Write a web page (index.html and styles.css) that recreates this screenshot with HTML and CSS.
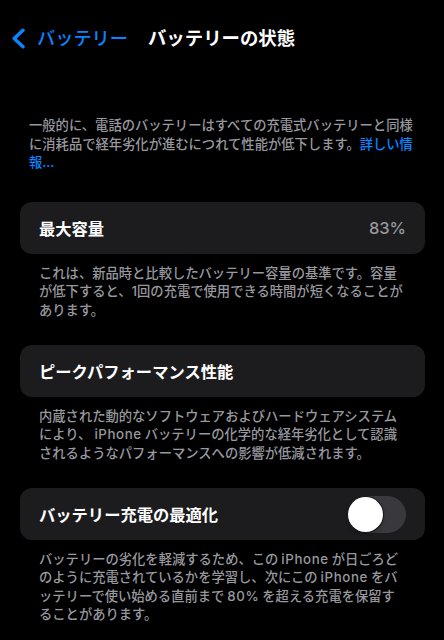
FILE: index.html
```html
<!DOCTYPE html>
<html lang="ja">
<head>
<meta charset="utf-8">
<title>バッテリーの状態</title>
<link rel="stylesheet" href="styles.css">
</head>
<body>
<header class="nav">
  <a class="back" href="#">
    <svg class="chev" width="15" height="21" viewBox="0 0 15 21" aria-hidden="true">
      <path d="M12 2.2 L3.2 10.5 L12 18.8" fill="none" stroke="#0a84ff" stroke-width="3.4" stroke-linecap="round" stroke-linejoin="round"/>
    </svg>
    <span class="back-label">バッテリー</span>
  </a>
  <h1 class="title">バッテリーの状態</h1>
</header>

<p class="intro">一般的に、電話のバッテリーはすべての充電式バッテリーと同様に消耗品で経年劣化が進むにつれて性能が低下します。<a class="link" href="#">詳しい情報...</a></p>

<section class="group">
  <div class="card">
    <span class="label">最大容量</span>
    <span class="value">83%</span>
  </div>
  <p class="note">これは、新品時と比較したバッテリー容量の基準です。容量が低下すると、1回の充電で使用できる時間が短くなることがあります。</p>
</section>

<section class="group">
  <div class="card">
    <span class="label">ピークパフォーマンス性能</span>
  </div>
  <p class="note">内蔵された動的なソフトウェアおよびハードウェアシステムにより、<span class="en">iPhone</span>バッテリーの化学的な経年劣化として認識されるようなパフォーマンスへの影響が低減されます。</p>
</section>

<section class="group">
  <div class="card">
    <span class="label">バッテリー充電の最適化</span>
    <span class="toggle"><span class="knob"></span></span>
  </div>
  <p class="note">バッテリーの劣化を軽減するため、この<span class="en">iPhone</span>が日ごろどのように充電されているかを学習し、次にこの<span class="en">iPhone</span>をバッテリーで使い始める直前まで<span class="en">80%</span>を超える充電を保留することがあります。</p>
</section>
</body>
</html>
```

FILE: styles.css
```css
* {
  box-sizing: border-box;
}

html, body {
  margin: 0;
  padding: 0;
  background: #000;
}

body {
  font-family: Inter, "Noto Sans CJK JP", "Noto Sans", sans-serif;
  color: #fff;
  width: 444px;
  min-height: 640px;
  overflow: hidden;
}

.nav {
  height: 76px;
  display: flex;
  align-items: center;
  padding-left: 11px;
}

.back {
  display: flex;
  align-items: center;
  text-decoration: none;
  color: #0a84ff;
}

.chev {
  display: block;
}

.back-label {
  margin-left: 11px;
  font-size: 18.2px;
  font-weight: 500;
  line-height: 24px;
}

.title {
  margin: 0 0 0 20px;
  font-size: 18.4px;
  font-weight: 700;
  line-height: 24px;
  color: #fff;
}

.intro {
  margin: 40px 0 0;
  padding: 0 24px 0 29px;
  font-size: 13.3px;
  line-height: 18.5px;
  color: #98989f;
  font-weight: 500;
}

.link {
  color: #0a84ff;
  text-decoration: none;
}

.group {
  margin-top: 30.5px;
}

.group + .group {
  margin-top: 26px;
}

.card {
  margin: 0 19px 0 20px;
  height: 52px;
  padding: 0 19px;
  background: #1c1c1e;
  border-radius: 12px;
  display: flex;
  align-items: center;
  justify-content: space-between;
}

.label {
  font-size: 16.3px;
  font-weight: 700;
  color: #fff;
}

.value {
  font-size: 16.5px;
  font-weight: 500;
  color: #98989f;
}

.note {
  margin: 9.5px 0 0;
  padding: 0 39px;
  font-size: 13.3px;
  line-height: 18.5px;
  color: #98989f;
  font-weight: 500;
}

.en {
  letter-spacing: 0.6px;
  padding: 0 3px;
}

.toggle {
  width: 59px;
  height: 37px;
  border-radius: 18.5px;
  background: #39393d;
  display: flex;
  align-items: center;
  padding: 0 1px;
}

.knob {
  width: 35px;
  height: 35px;
  border-radius: 50%;
  background: #fff;
  box-shadow: 0 0 0 1px rgba(0, 0, 0, 0.55), 0 2px 4px rgba(0, 0, 0, 0.3);
}
```
